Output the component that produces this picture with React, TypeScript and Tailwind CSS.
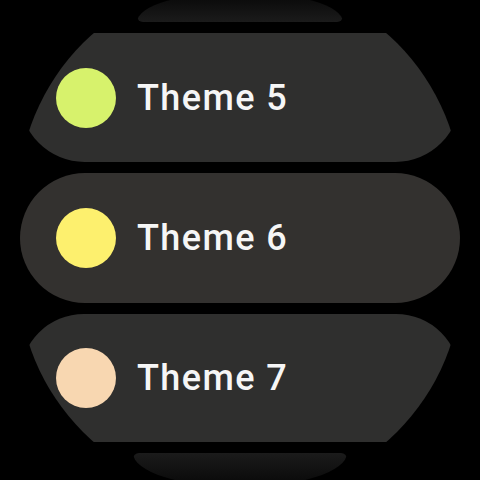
import * as React from "react";

type Theme = {
  label: string;
  swatch: string;
  bg: string;
  clip: string;
  height: string;
};

const themes: Theme[] = [
  {
    label: "Theme 5",
    swatch: "bg-[#d7f26c]",
    bg: "bg-[#2f2f2e]",
    clip: "[clip-path:circle(222px_at_220px_167px)]",
    height: "h-[129px]",
  },
  {
    label: "Theme 6",
    swatch: "bg-[#fdf06e]",
    bg: "bg-[#33312f]",
    clip: "",
    height: "h-[130px]",
  },
  {
    label: "Theme 7",
    swatch: "bg-[#f8d7b1]",
    bg: "bg-[#2f2f2e]",
    clip: "[clip-path:circle(222px_at_220px_-39px)]",
    height: "h-[128px]",
  },
];

function ThemeChip({ theme }: { theme: Theme }) {
  return (
    <div
      className={`flex w-[440px] shrink-0 items-center gap-[21px] rounded-full pl-[36px] ${theme.bg} ${theme.height} ${theme.clip}`}
    >
      <div className={`h-[60px] w-[60px] shrink-0 rounded-full ${theme.swatch}`} />
      <span className="text-[36px] font-medium leading-none tracking-[1.4px] text-[#f6f6f6]">
        {theme.label}
      </span>
    </div>
  );
}

export default function App() {
  return (
    <div
      className="flex h-[480px] w-[480px] flex-col items-center gap-[11px] overflow-hidden bg-black"
      style={{ fontFamily: "Roboto, 'Noto Sans', sans-serif" }}
    >
      {/* peeking item above */}
      <div className="h-[22px] w-[206px] shrink-0 rounded-b-[6px] bg-gradient-to-b from-[#0c0c0c] to-[#1b1b1b] [clip-path:ellipse(103px_30px_at_50%_100%)]" />
      {themes.map((t) => (
        <ThemeChip key={t.label} theme={t} />
      ))}
      {/* peeking item below */}
      <div className="h-[27px] w-[214px] shrink-0 rounded-t-[6px] bg-gradient-to-b from-[#1b1b1b] to-[#0c0c0c] [clip-path:ellipse(107px_34px_at_50%_0%)]" />
    </div>
  );
}
